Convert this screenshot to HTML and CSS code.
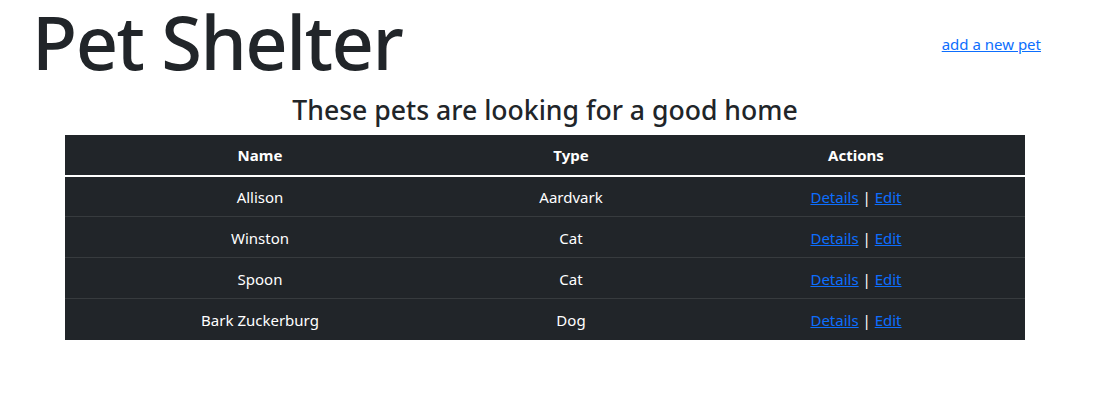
FILE: index.html
```html
<!DOCTYPE html>
<html lang="en">
<head>
<meta charset="utf-8">
<title>Pet Shelter</title>
<link rel="stylesheet" href="styles.css">
</head>
<body>
<div class="page">
  <header class="top">
    <h1 class="title">Pet Shelter</h1>
    <a class="add-link" href="#">add a new pet</a>
  </header>
  <h3 class="subtitle">These pets are looking for a good home</h3>
  <table class="pets">
    <colgroup>
      <col class="c-name">
      <col class="c-type">
      <col class="c-actions">
    </colgroup>
    <thead>
      <tr><th>Name</th><th>Type</th><th>Actions</th></tr>
    </thead>
    <tbody>
      <tr><td>Allison</td><td>Aardvark</td><td><a href="#">Details</a> | <a href="#">Edit</a></td></tr>
      <tr><td>Winston</td><td>Cat</td><td><a href="#">Details</a> | <a href="#">Edit</a></td></tr>
      <tr><td>Spoon</td><td>Cat</td><td><a href="#">Details</a> | <a href="#">Edit</a></td></tr>
      <tr><td>Bark Zuckerburg</td><td>Dog</td><td><a href="#">Details</a> | <a href="#">Edit</a></td></tr>
    </tbody>
  </table>
</div>
</body>
</html>
```
FILE: styles.css
```css
* { box-sizing: border-box; }
html, body { margin: 0; padding: 0; }
body {
  font-family: "Noto Sans", "Open Sans", sans-serif;
  font-size: 15px;
  line-height: 1.5;
  color: #212529;
  background: #fff;
}
.page {
  width: 1090px;
}
.top {
  display: flex;
  justify-content: space-between;
  align-items: flex-start;
  padding: 0 49px 0 32px;
}
.title {
  margin: 0;
  font-size: 74px;
  font-weight: 500;
  line-height: 84.6px;
  letter-spacing: -1.5px;
}
.add-link {
  margin-top: 33px;
  color: #0d6efd;
  font-size: 15px;
}
.subtitle {
  margin: 10px 0 8px;
  text-align: center;
  font-size: 26.6px;
  font-weight: 500;
  line-height: 1.2;
}
.pets {
  width: 960px;
  margin: 0 auto;
  border-collapse: collapse;
  table-layout: fixed;
  background: #212529;
  color: #fff;
}
.c-name { width: 390px; }
.c-type { width: 232px; }
.c-actions { width: 338px; }
.pets th, .pets td {
  text-align: center;
  padding: 9px 8px 7px;
  height: 41px;
}
.pets th {
  font-weight: 700;
  height: 41px;
  border-bottom: 2px solid #fff;
}
.pets tbody tr + tr td {
  border-top: 1px solid #373b3e;
}
.pets a { color: #0d6efd; }
```
